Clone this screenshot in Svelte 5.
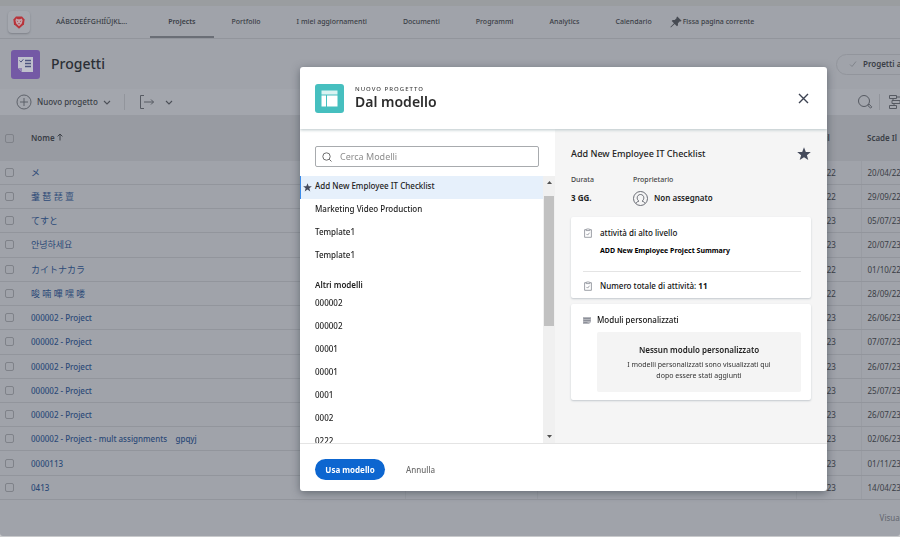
<script>
  const nav = [
    { label: 'AÁBCDEÉFGHIÍŰJKL...', lead: true },
    { label: 'Projects', active: true },
    { label: 'Portfolio' },
    { label: 'I miei aggiornamenti' },
    { label: 'Documenti' },
    { label: 'Programmi' },
    { label: 'Analytics' },
    { label: 'Calendario' }
  ];

  const rows = [
    ['メ', '18/04/22', '20/04/22', 'ja'],
    ['耋 琶 琵 亶', '27/09/22', '29/09/22', 'zh'],
    ['てすと', '03/07/23', '05/07/23', 'ja'],
    ['안녕하세요', '18/07/23', '20/07/23', 'ko'],
    ['カイトナカラ', '29/09/22', '01/10/22', 'ja'],
    ['唆 喃 嗶 嘿 喽', '26/09/22', '28/09/22', 'zh'],
    ['000002 - Project', '24/06/23', '26/06/23'],
    ['000002 - Project', '05/07/23', '07/07/23'],
    ['000002 - Project', '24/07/23', '26/07/23'],
    ['000002 - Project', '23/07/23', '25/07/23'],
    ['000002 - Project', '24/07/23', '26/07/23'],
    ['000002 - Project - mult assignments \u00a0\u00a0 gpqyj', '31/05/23', '02/06/23'],
    ['0000113', '30/10/23', '01/11/23'],
    ['0413', '12/04/23', '14/04/23']
  ];

  const favorites = ['Add New Employee IT Checklist', 'Marketing Video Production', 'Template1', 'Template1'];
  const others = ['000002', '000002', '00001', '00001', '0001', '0002', '0222'];
  let selected = $state(0);
  let query = $state('');
</script>

{#snippet star(size)}
  <svg width={size} height={size} viewBox="0 0 14 14"><path fill="#454b5c" d="M7 0.2l1.8 4.7 5 .2-3.9 3.1 1.4 4.9L7 10.3l-4.3 2.8 1.4-4.9L.2 5.1l5-.2z" /></svg>
{/snippet}

{#snippet clipboard()}
  <svg width="10" height="10" viewBox="0 0 10 10" fill="none" stroke="#858992" stroke-width=".8">
    <path d="M3 1.7H1.600v7.600h6.800V1.700H7" /><path d="M3.200 2.600V1.200h1L5 .5l.8.7h1v1.400z" /><path d="M3.400 5.900l1.200 1.200 2-2.400" />
  </svg>
{/snippet}

{#snippet chevron()}
  <svg width="8" height="8" viewBox="0 0 8 8" fill="none" stroke="#4c5058" stroke-width="1.1"><path d="M1 3l3 3 3-3" /></svg>
{/snippet}

<div class="page">
  <div class="strip"></div>
  <nav>
    <a class="logo" href="#home" aria-label="Home">
      <svg width="12" height="13" viewBox="0 0 12 13">
        <path fill="#b8333a" d="M3 .6h6l2.600 3-.6 4.600L6 12.800 1 8.200 .4 3.600z" />
        <path fill="#c3a4aa" d="M3.400 2.600l1.500.6h2.200l1.500-.6 1 1.700-.8 3.200L6 10.200 3.200 7.500l-.8-3.200z" />
        <path fill="#a83238" d="M3.600 4.400l1.500.8-.5.700zM8.400 4.400l-1.500.8.5.700zM5 7.300h2L6 8.600z" />
      </svg>
    </a>
    {#each nav as item}
      <a class="tab" class:active={item.active} class:lead={item.lead} href="#{item.label}">{item.label}</a>
    {/each}
    <a class="tab pin" href="#pin">
      <svg width="12" height="12" viewBox="0 0 12 12"><path fill="#474b53" d="M7.300.4l4.300 4.300-.8.800-.9-.2-2 2 .1 2-1 1-2.400-2.400L.9 11.500l-.5-.5L4 7.300 1.700 5l1-1 2 .1 2-2-.200-.9z" /></svg>
      Fissa pagina corrente
    </a>
  </nav>

  <header class="title">
    <span class="tile purple">
      <svg width="17" height="17" viewBox="0 0 17 17">
        <path fill="#bfc0cc" d="M1 1h15v15H5l-4-4z" /><path fill="#8f82b4" d="M1 12h4v4z" />
        <path stroke="#4d5580" stroke-width="1" fill="none" d="M2.500 4.500l1.500 1.600 2.300-2.800" />
        <path stroke="#4d5580" stroke-width="1.300" d="M8 4.500h6M8 7.500h6M8 10.500h6" />
      </svg>
    </span>
    <h1>Progetti</h1>
    <button class="filter">
      <svg width="8" height="8" viewBox="0 0 8 8" fill="none" stroke="#80848b"><path d="M1 4.500l2 2 4-5" /></svg>
      Progetti attivi
    </button>
  </header>

  <div class="toolbar">
    <button class="new">
      <svg width="16" height="16" viewBox="0 0 16 16" fill="none" stroke="#565a62" stroke-width=".9"><circle cx="8" cy="8" r="7" /><path d="M8 4v8M4 8h8" /></svg>
      <span>Nuovo progetto</span>
      {@render chevron()}
    </button>
    <span class="sep"></span>
    <button class="export" aria-label="Esporta">
      <svg width="16" height="14" viewBox="0 0 16 14" fill="none" stroke="#565a62"><path d="M5 .5H1.500v13H5M5 7h9.500M12 4.500L14.500 7 12 9.500" /></svg>
      {@render chevron()}
    </button>
    <div class="tools">
      <button aria-label="Cerca">
        <svg width="16" height="16" viewBox="0 0 16 16" fill="none" stroke="#565a62"><circle cx="7" cy="7" r="5.500" /><path d="M11 11l1-.8 2.800 2.700-1.200 1.200L10.800 11.500z" /></svg>
      </button>
      <span class="sep"></span>
      <button aria-label="Gantt">
        <svg width="16" height="16" viewBox="0 0 16 16" fill="none" stroke="#565a62"><path d="M1.500 1.500h7v3h-7zM4 6.500h8v3H4zM1.500 11.500h7v3h-7zM5 4.500v2M6 9.500v2M12 8h3M8.500 3h6" /></svg>
      </button>
    </div>
  </div>

  <main>
    <table>
      <colgroup><col class="c-check" /><col class="c-name" /><col class="c-a" /><col class="c-b" /><col class="c-date" /><col /></colgroup>
      <thead>
        <tr>
          <th class="first"><input type="checkbox" aria-label="Seleziona tutto" /></th>
          <th>Nome <svg width="6" height="8" viewBox="0 0 6 8" fill="none" stroke="#3f434a"><path d="M3 7.500V1M.6 3.400L3 1l2.400 2.400" /></svg></th>
          <th></th><th></th><th>Inizia il</th><th>Scade Il</th>
        </tr>
      </thead>
      <tbody>
        {#each rows as [name, start, due, lang]}
          <tr>
            <td class="first"><input type="checkbox" aria-label="Seleziona {name}" /></td>
            <td><a href="#progetto" class:cjk={lang} lang={lang}>{name}</a></td>
            <td></td><td></td>
            <td>{start}</td>
            <td>{due}</td>
          </tr>
        {/each}
      </tbody>
    </table>
  </main>
  <footer>Visualizzazione</footer>
</div>

<div class="overlay">
  <div class="modal" role="dialog" aria-modal="true" aria-labelledby="dlg-title">
    <div class="head">
      <span class="tile teal">
        <svg width="17" height="17" viewBox="0 0 17 17"><path fill="#d9f3f2" d="M.5.5h16v4H.5z" /><path fill="#fff" d="M.5 5.500h4.500v11H.5zM6 5.500h10.500v11H6z" /></svg>
      </span>
      <div class="names">
        <p>NUOVO PROGETTO</p>
        <h2 id="dlg-title">Dal modello</h2>
      </div>
      <button class="close" aria-label="Chiudi">
        <svg width="11" height="11" viewBox="0 0 11 11" stroke="#3d4352" stroke-width="1.400"><path d="M1 1l9 9M10 1l-9 9" /></svg>
      </button>
    </div>

    <div class="body">
      <section class="left">
        <label class="search">
          <svg width="10" height="10" viewBox="0 0 10 10" fill="none" stroke="#6e6e6e"><circle cx="4.500" cy="4.500" r="3.700" /><path d="M7.200 7.200L9.500 9.500" /></svg>
          <input type="text" placeholder="Cerca Modelli" aria-label="Cerca Modelli" bind:value={query} />
        </label>
        <div class="scroller">
          <div class="list">
            {#each favorites as name, i}
              <button class="item" class:selected={selected === i} onclick={() => (selected = i)}>
                {#if selected === i}<span class="mark">{@render star(9)}</span>{/if}{name}
              </button>
            {/each}
            <h3>Altri modelli</h3>
            {#each others as name, i}
              <button class="item" class:selected={selected === i + 4} onclick={() => (selected = i + 4)}>{name}</button>
            {/each}
          </div>
          <div class="bar">
            <svg width="5" height="3" viewBox="0 0 5 3"><path fill="#505050" d="M0 3l2.500-3L5 3z" /></svg>
            <span class="thumb"></span>
            <svg width="5" height="3" viewBox="0 0 5 3"><path fill="#505050" d="M0 0h5L2.500 3z" /></svg>
          </div>
        </div>
      </section>

      <section class="right">
        <div class="heading"><h3>Add New Employee IT Checklist</h3>{@render star(14)}</div>
        <dl>
          <div><dt>Durata</dt><dd><b>3 GG.</b></dd></div>
          <div>
            <dt>Proprietario</dt>
            <dd>
              <svg width="15" height="15" viewBox="0 0 15 15" fill="none" stroke="#5b5f68" stroke-width=".9"><circle cx="7.500" cy="7.500" r="7" /><path d="M3.200 12.300c.2-1.400 1.600-1.700 2.700-2.100-1.200-1-1.700-2-1.700-3.400C4.200 4.900 5.600 3.500 7.500 3.500s3.300 1.400 3.300 3.300c0 1.400-.5 2.400-1.700 3.400 1.100.4 2.500.7 2.700 2.100" /></svg>
              <span>Non assegnato</span>
            </dd>
          </div>
        </dl>
        <div class="card tasks">
          <p class="line">{@render clipboard()}attività di alto livello</p>
          <p class="summary">ADD New Employee Project Summary</p>
          <p class="line total">{@render clipboard()}<span>Numero totale di attività: <b>11</b></span></p>
        </div>
        <div class="card forms">
          <p class="line">
            <svg width="8" height="7" viewBox="0 0 8 7"><path fill="#b4b6bc" d="M0 0h8v5L6 7H0z" /><path stroke="#7c808a" stroke-width=".7" d="M.5 1.500h7M.5 3.500h7M.5 5.500h4" /></svg>
            Moduli personalizzati
          </p>
          <div class="empty">
            <b>Nessun modulo personalizzato</b>
            <p>I modelli personalizzati sono visualizzati qui<br />dopo essere stati aggiunti</p>
          </div>
        </div>
      </section>
    </div>

    <div class="foot">
      <button class="primary">Usa modello</button>
      <button class="cancel">Annulla</button>
    </div>
  </div>
</div>

<style>
  :global(body) { background: #c9cacc; }
  * { box-sizing: border-box; margin: 0; padding: 0; }
  svg { flex: none; display: block; }
  button, input { font: inherit; color: inherit; background: none; border: 0; }
  a { color: inherit; text-decoration: none; }
  .page, .overlay { font-family: "Noto Sans", "Noto Sans CJK JP", "Noto Sans CJK KR", sans-serif; font-size: 8px; line-height: 12px; }

  .page { display: flex; flex-direction: column; height: calc(100vh - 1px); overflow: hidden; background: #a0a3aa; border-radius: 0 0 3px 3px; color: #3a3e46; }
  .strip { flex: none; height: 6px; background: #9a9da0; }
  nav { flex: none; display: flex; height: 33px; border-bottom: 1px solid #92959c; padding-left: 8px; font-size: 7px; font-weight: 600; white-space: nowrap; }
  .logo { display: grid; place-items: center; width: 22px; height: 22px; margin: 5px 8px 0 0; background: #a5a8af; border-radius: 4px; box-shadow: 0 1px 2px #7d8088; }
  .tab { display: flex; align-items: center; justify-content: center; padding: 2px 18px 0; border-bottom: 2px solid transparent; font-weight: 500; }
  .tab.lead { padding-right: 23px; }
  .tab.active { border-bottom-color: #6a6e76; font-weight: 600; }
  .tab.pin { gap: 1px; padding: 2px 0 0; }

  .title { flex: none; display: flex; align-items: center; height: 50px; padding-left: 11px; }
  .tile { display: grid; place-items: center; width: 29px; height: 29px; border-radius: 3px; flex: none; }
  .purple { background: #7459a5; }
  h1 { margin-left: 11px; font-size: 14px; line-height: 20px; font-weight: 500; color: #2b2f36; }
  .filter { display: flex; align-items: center; gap: 6px; flex: none; height: 21px; width: 90px; margin: 0 -26px 0 auto; padding-left: 12px; border: 1px solid #92959c; border-radius: 11px; font-weight: 600; white-space: nowrap; }

  .toolbar { flex: none; display: flex; align-items: center; height: 26px; padding-left: 16px; background: #a3a6ad; }
  .toolbar button { display: flex; align-items: center; }
  .new { gap: 5px; font-weight: 500; }
  .sep { width: 1px; height: 16px; background: #92959c; }
  .new + .sep { margin: 0 14px 0 13px; }
  .export { gap: 10px; }
  .tools { display: flex; align-items: center; margin-left: auto; margin-right: -4px; gap: 6px; }
  .tools .sep { margin-right: 2px; }

  main { flex: 1; min-height: 0; }
  table { width: 100%; height: 100%; table-layout: fixed; border-collapse: collapse; }
  .c-check { width: 25px; }
  .c-name { width: 380px; }
  .c-a { width: 132px; }
  .c-b { width: 259px; }
  .c-date { width: 65px; }
  thead tr { height: 46px; background: #989ba2; }
  th, td { padding: 1px 6px 0; text-align: left; white-space: nowrap; vertical-align: middle; }
  th { padding-top: 0; font-weight: 600; }
  th svg { display: inline-block; }
  td { border-bottom: 1px solid #92959c; border-left: 1px solid #999ca3; }
  td.first, td.first + td { border-left: 0; }
  td.first, th.first { padding: 0 0 0 5px; }
  td a { color: #2c4a78; font-weight: 500; }
  .cjk { font-size: 9px; font-weight: 400; }
  input[type="checkbox"] { appearance: none; display: block; width: 9px; height: 9px; border: 1px solid #7f8289; border-radius: 2px; }
  footer { flex: none; height: 36px; padding-top: 12px; text-align: right; margin-right: -36px; color: #62666e; }

  .overlay { position: fixed; inset: 0; display: flex; justify-content: center; padding: 67px 0 46px 227px; color: #222; }
  .modal { display: flex; flex-direction: column; width: 100%; max-width: 527px; background: #fff; border-radius: 3px; box-shadow: 0 2px 8px rgba(40, 50, 60, .5); overflow: hidden; }
  .head { flex: none; position: relative; display: flex; align-items: center; height: 62px; padding: 0 18px 0 15px; box-shadow: 0 1px 3px #b9c6c8; }
  .teal { background: #46bfbf; }
  .names { margin-left: 11px; }
  .names p { font-size: 6px; line-height: 8px; letter-spacing: 1px; color: #444; font-weight: 500; }
  h2 { font-size: 14px; line-height: 18px; font-weight: 600; color: #2c2c2c; }
  .close { margin-left: auto; }

  .body { flex: 1; min-height: 0; display: flex; }
  .left { flex: 0 0 255px; display: flex; flex-direction: column; }
  .search { flex: none; display: flex; align-items: center; gap: 8px; height: 21px; margin: 17px 16px 9px 15px; padding: 0 6px; border: 1px solid #a8abae; border-radius: 2px; font-size: 9px; }
  .search input { flex: 1; min-width: 0; outline: 0; }
  .search input::placeholder { color: #8d8d8d; opacity: 1; }
  .scroller { flex: 1; min-height: 0; display: flex; }
  .list { flex: 1; overflow: hidden; }
  .item { position: relative; display: block; width: 100%; height: 23px; padding: 0 0 3px 15px; text-align: left; font-weight: 500; }
  .item.selected { background: #e6f0fb; box-shadow: inset 1px 0 #3b8bea; }
  .mark { position: absolute; left: 3px; top: 7px; }
  .list h3 { padding: 11px 0 2px 15px; font-size: 8px; line-height: 12px; font-weight: 600; }
  .bar { display: flex; flex-direction: column; align-items: center; width: 12px; padding: 5px 0; background: #f0f0f0; }
  .thumb { width: 10px; height: 130px; margin: 12px 0 auto; background: #c1c1c1; }

  .right { flex: 1; padding: 16px 16px 0; background: #f5f5f5; }
  .heading { display: flex; align-items: center; justify-content: space-between; height: 18px; }
  .heading h3 { font-size: 9px; font-weight: 500; }
  dl { display: flex; margin: 11px 0; }
  dl > div:first-child { width: 62px; }
  dt { font-size: 7px; line-height: 12px; font-weight: 500; color: #444; }
  dd { display: flex; align-items: center; gap: 6px; height: 16px; margin-top: 4px; }
  dd span { font-weight: 600; }
  .card { background: #fff; border-radius: 2px; box-shadow: 0 1px 2px #c3c8cd; }
  .line { display: flex; align-items: center; color: #111; font-weight: 500; }
  .tasks { height: 81px; padding: 10px 10px 0 12px; }
  .tasks .line { gap: 7px; }
  .summary { margin: 6px 0 14px 17px; font-size: 7px; font-weight: 700; color: #000; }
  .total { height: 28px; border-top: 1px solid #e4e4e4; }
  .forms { margin-top: 6px; padding: 10px 10px 8px 12px; }
  .forms .line { gap: 6px; }
  .empty { margin: 6px 0 0 14px; padding: 12px 0 11px; background: #f4f4f4; border-radius: 2px; text-align: center; }
  .empty b { display: block; font-weight: 600; }
  .empty p { margin-top: 3px; font-size: 7px; line-height: 11px; color: #333; }

  .foot { flex: none; display: flex; align-items: center; height: 48px; padding: 4px 15px 0; border-top: 1px solid #e4e4e4; }
  .primary { height: 21px; width: 70px; border-radius: 11px; background: #0d66d0; color: #fff; font-weight: 700; }
  .cancel { margin-left: 21px; color: #6e6e6e; font-weight: 500; }
</style>
